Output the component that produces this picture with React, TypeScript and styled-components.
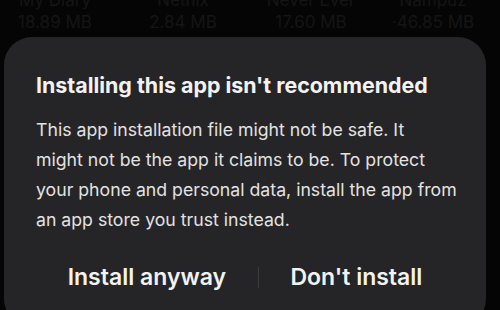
import React from "react";
import styled, { createGlobalStyle } from "styled-components";

const Global = createGlobalStyle`
  html, body { margin: 0; padding: 0; background: #050505; }
  body { width: 500px; height: 310px; overflow: hidden; font-family: Inter, Roboto, "Noto Sans", sans-serif; }
`;

const Screen = styled.div`
  width: 500px;
  height: 310px;
  overflow: hidden;
  background: #050505;
`;

const AppStrip = styled.div`
  height: 37px;
  overflow: hidden;
`;

const AppGrid = styled.div`
  display: grid;
  grid-template-columns: 110px 146px 110px 134px;
  margin-top: -11px;
`;

const AppCell = styled.div`
  display: flex;
  flex-direction: column;
  align-items: center;
  color: #151515;
  font-size: 17px;
  line-height: 22px;
`;

const Dialog = styled.div`
  margin-left: 4px;
  width: 482px;
  height: 290px;
  background: #252527;
  border-radius: 28px;
  padding: 34px 32px 0 32px;
  box-sizing: border-box;
  display: flex;
  flex-direction: column;
`;

const Title = styled.h1`
  margin: 0;
  font-size: 21.4px;
  font-weight: 700;
  line-height: 28px;
  color: #f2f2f2;
  white-space: nowrap;
`;

const Body = styled.p`
  margin: 16px 0 0 0;
  font-size: 17.7px;
  line-height: 30px;
  color: #e2e2e2;
  white-space: nowrap;
`;

const Actions = styled.div`
  display: flex;
  align-items: center;
  margin-top: 22px;
`;

const ActionButton = styled.button`
  flex: 1 1 auto;
  background: none;
  border: none;
  color: #f2f2f2;
  font-family: inherit;
  font-size: 23px;
  font-weight: 600;
  padding: 0;
  height: 40px;
  text-align: center;
`;

const Divider = styled.div`
  flex: none;
  width: 1px;
  height: 21px;
  background: #3c3c3e;
`;

const apps = [
  { name: "My Diary", size: "18.89 MB" },
  { name: "Netflix", size: "2.84 MB" },
  { name: "Never Ever", size: "17.60 MB" },
  { name: "Nampuz", size: "·46.85 MB" },
];

export default function App() {
  return (
    <Screen>
      <Global />
      <AppStrip>
        <AppGrid>
          {apps.map((a) => (
            <AppCell key={a.name}>
              <span>{a.name}</span>
              <span>{a.size}</span>
            </AppCell>
          ))}
        </AppGrid>
      </AppStrip>
      <Dialog>
        <Title>Installing this app isn't recommended</Title>
        <Body>
          This app installation file might not be safe. It
          <br />
          might not be the app it claims to be. To protect
          <br />
          your phone and personal data, install the app from
          <br />
          an app store you trust instead.
        </Body>
        <Actions>
          <ActionButton>Install anyway</ActionButton>
          <Divider />
          <ActionButton>Don't install</ActionButton>
        </Actions>
      </Dialog>
    </Screen>
  );
}
